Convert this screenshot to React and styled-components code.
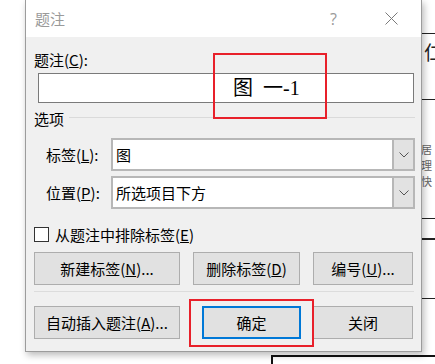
import React from 'react';
import styled, {createGlobalStyle} from 'styled-components';

const GlobalStyle = createGlobalStyle`
  html, body {
    margin: 0;
    padding: 0;
    background: #ffffff;
  }
  body {
    font-family: "Noto Sans CJK SC", "Noto Sans", sans-serif;
    font-size: 15px;
    color: #000;
  }
`

function Chevron() {
  return (
    <svg width="10" height="6" viewBox="0 0 10 6">
      <path d="M0.5 0.5 L5 5 L9.5 0.5" fill="none" stroke="#555" strokeWidth="1"/>
    </svg>
  )
}

function CloseIcon() {
  return (
    <svg width="13" height="13" viewBox="0 0 13 13">
      <path d="M0.5 0.5 L12.5 12.5 M12.5 0.5 L0.5 12.5" stroke="#7a7a7a" strokeWidth="1"/>
    </svg>
  )
}

function App() {
  return (
    <Desktop>
      <GlobalStyle/>
      {/* the document behind the dialog */}
      <DocLine $top={33}/>
      <DocLine $top={99}/>
      <DocLine $top={218}/>
      <DocLine $top={238} $thick/>
      <DocLine $top={298}/>
      <DocGlyph>仁</DocGlyph>
      <DocSmall>居<br/>理<br/>快</DocSmall>
      <DocBox/>

      <Dialog>
        <TitleBar>
          <Title>题注</Title>
          <TitleButtons>
            <Help>?</Help>
            <CloseIcon/>
          </TitleButtons>
        </TitleBar>

        <Body>
          <FieldLabel>题注(<u>C</u>):</FieldLabel>
          <CaptionInput>{'图  一-1'}</CaptionInput>

          <Section>
            <span>选项</span>
            <Rule/>
          </Section>

          <Options>
            <OptionRow>
              <OptionLabel>标签(<u>L</u>):</OptionLabel>
              <Select>
                <SelectValue>图</SelectValue>
                <DropButton><Chevron/></DropButton>
              </Select>
            </OptionRow>
            <OptionRow>
              <OptionLabel>位置(<u>P</u>):</OptionLabel>
              <Select>
                <SelectValue>所选项目下方</SelectValue>
                <DropButton><Chevron/></DropButton>
              </Select>
            </OptionRow>
          </Options>

          <CheckRow>
            <CheckBox/>
            <span>从题注中排除标签(<u>E</u>)</span>
          </CheckRow>

          <ButtonRow $gap={13} $top={8}>
            <Button $w={146}>新建标签(<u>N</u>)...</Button>
            <Button $w={107}>删除标签(<u>D</u>)</Button>
            <Button $w={100}>编号(<u>U</u>)...</Button>
          </ButtonRow>

          <Separator/>

          <ButtonRow $gap={12} $top={14}>
            <Button $w={146}>自动插入题注(<u>A</u>)...</Button>
            <Button $w={99} $primary>确定</Button>
            <Button $w={100}>关闭</Button>
          </ButtonRow>
        </Body>
      </Dialog>

      <Mark $x={213} $y={53} $w={114} $h={66}/>
      <Mark $x={189} $y={299} $w={125} $h={48}/>
    </Desktop>
  )
}

const Desktop = styled.div`
  position: relative;
  width: 435px;
  height: 364px;
  overflow: hidden;
  background: #ffffff;
`

const DocLine = styled.div`
  position: absolute;
  left: 400px;
  right: 0;
  top: ${p => p.$top}px;
  height: ${p => (p.$thick ? 2 : 1)}px;
  background: #222;
`

const DocGlyph = styled.div`
  position: absolute;
  left: 424px;
  top: 40px;
  font-size: 19px;
  line-height: 24px;
  color: #222;
`

const DocSmall = styled.div`
  position: absolute;
  left: 421px;
  top: 141px;
  font-size: 11px;
  line-height: 16px;
  color: #666;
`

const DocBox = styled.div`
  position: absolute;
  left: 271px;
  top: 355px;
  width: 200px;
  height: 40px;
  border-top: 2px solid #111;
  border-left: 2px solid #111;
`

const Dialog = styled.div`
  position: absolute;
  left: 25px;
  top: 0;
  width: 397px;
  height: 352px;
  box-sizing: border-box;
  background: #f0f0f0;
  border: 1px solid #9c9c9c;
  border-top: none;
  box-shadow: 2px 3px 7px rgba(0, 0, 0, 0.28);
  display: flex;
  flex-direction: column;
`

const TitleBar = styled.div`
  height: 37px;
  flex: none;
  background: #ffffff;
  display: flex;
  align-items: center;
  justify-content: space-between;
  padding: 0 23px 0 9px;
`

const Title = styled.span`
  font-size: 15px;
  color: #9a9a9a;
`

const TitleButtons = styled.div`
  display: flex;
  align-items: center;
  gap: 48px;
`

const Help = styled.span`
  font-family: "Open Sans", "Noto Sans", sans-serif;
  font-size: 16px;
  color: #9a9a9a;
`

const Body = styled.div`
  padding: 0 7px 0 8px;
  display: flex;
  flex-direction: column;
`

const FieldLabel = styled.div`
  margin-top: 13px;
  line-height: 20px;
`

const CaptionInput = styled.div`
  margin: 3px 0 0 4px;
  height: 30px;
  box-sizing: border-box;
  width: 376px;
  background: #ffffff;
  border: 1px solid #7a7a7a;
  padding-left: 194px;
  font-family: "Liberation Serif", "Noto Sans CJK SC", serif;
  font-size: 20px;
  line-height: 28px;
  white-space: pre;
`

const Section = styled.div`
  margin-top: 6px;
  line-height: 20px;
  display: flex;
  align-items: center;
  gap: 5px;
`

const Rule = styled.div`
  flex: 1;
  height: 1px;
  margin-top: -3px;
  margin-right: -1px;
  background: #dadada;
`

const Options = styled.div`
  margin-top: 9px;
  display: flex;
  flex-direction: column;
  gap: 5px;
`

const OptionRow = styled.div`
  display: flex;
  align-items: center;
  padding-left: 12px;
`

const OptionLabel = styled.span`
  width: 65px;
  flex: none;
`

const Select = styled.div`
  flex: 1;
  height: 33px;
  box-sizing: border-box;
  margin-right: -1px;
  border: 2px solid #b7b7b7;
  background: #ffffff;
  display: flex;
`

const SelectValue = styled.span`
  flex: 1;
  padding-left: 3px;
  line-height: 29px;
`

const DropButton = styled.span`
  width: 19px;
  background: #e2e2e2;
  border-left: 2px solid #b7b7b7;
  display: flex;
  align-items: center;
  justify-content: center;
`

const CheckRow = styled.div`
  margin-top: 15px;
  height: 20px;
  display: flex;
  align-items: center;
  gap: 6px;
`

const CheckBox = styled.span`
  width: 15px;
  height: 15px;
  box-sizing: border-box;
  border: 1px solid #333;
  background: #ffffff;
`

const ButtonRow = styled.div`
  margin-top: ${p => p.$top}px;
  display: flex;
  gap: ${p => p.$gap}px;
`

const Button = styled.div`
  width: ${p => p.$w}px;
  height: 33px;
  box-sizing: border-box;
  margin-left: ${p => (p.$primary ? 10 : 0)}px;
  background: #e1e1e1;
  border: ${p => (p.$primary ? '2px solid #0078d7' : '1px solid #adadad')};
  display: flex;
  align-items: center;
  justify-content: center;
`

const Separator = styled.div`
  margin-top: 6px;
  height: 1px;
  width: 380px;
  background: #dcdcdc;
`

const Mark = styled.div`
  position: absolute;
  left: ${p => p.$x}px;
  top: ${p => p.$y}px;
  width: ${p => p.$w}px;
  height: ${p => p.$h}px;
  box-sizing: border-box;
  border: 2px solid #e8202a;
`

export default App
